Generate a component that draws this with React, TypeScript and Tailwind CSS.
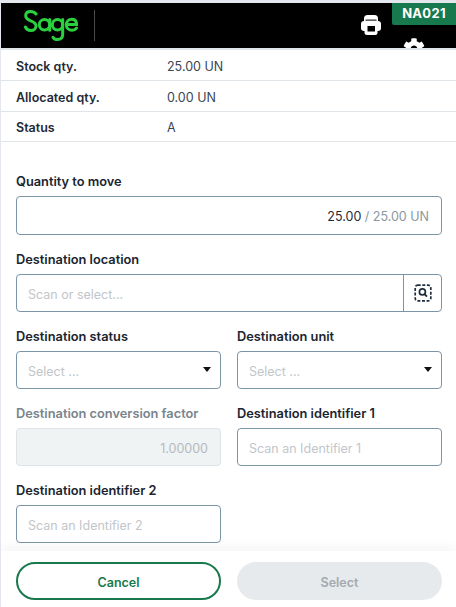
import { FaCog } from "react-icons/fa";

const font = { fontFamily: "Inter, 'Noto Sans', sans-serif" };

const SageLogo = () => (
  <svg width="54" height="31" viewBox="0 0 54 31" fill="none" stroke="#2bd03f" strokeWidth="3" strokeLinecap="round">
    <path d="M12 4C10.5 2 8.5 1.5 6.5 1.5 3.5 1.5 1.7 3.2 1.7 5.8c0 2.7 2 3.9 5 5 3.5 1.2 5.3 2.5 5.3 5.2 0 2.7-2.2 4.5-5.2 4.5-2.5 0-4.3-1.2-5.4-3.5" />
    <circle cx="20.5" cy="14.8" r="5.2" />
    <path d="M25.7 9.5V20.3" />
    <circle cx="33.5" cy="14.8" r="5.2" />
    <path d="M38.7 9.5V24.5c0 3.3-2.2 5-5.2 5-2 0-3.5-.7-4.5-2.2" />
    <path d="M42.8 14.6H52.6C52.6 11 50.8 9.2 47.8 9.2 44.6 9.2 42.3 11.4 42.3 14.7 42.3 18 44.8 20.3 48 20.3c2 0 3.5-.8 4.5-2.2" />
  </svg>
);

const PrintIcon = () => (
  <svg width="20" height="20" viewBox="0 0 20 20" className="absolute top-[12px] left-[360px]">
    <rect x="3" y="0" width="14" height="9" rx="3.5" fill="#fff" />
    <rect x="4.5" y="4.6" width="11" height="1" fill="#000" />
    <rect x="0" y="6" width="20" height="10" rx="3" fill="#fff" />
    <rect x="3.5" y="10" width="13" height="10" rx="2.5" fill="#fff" />
    <rect x="6.5" y="11" width="7.5" height="5.5" fill="#000" />
  </svg>
);

const ScanIcon = () => (
  <svg width="18" height="18" viewBox="0 0 18 18" fill="none" stroke="#1f2d3d">
    <rect x="1.2" y="1.2" width="15.6" height="15.6" rx="2.5" strokeWidth="1.7" strokeDasharray="3 1.6" />
    <circle cx="8.4" cy="7.9" r="3" strokeWidth="1.7" />
    <path d="M10.6 10.2l2.4 2.4" strokeWidth="1.9" />
  </svg>
);

const Info = ({ label, value, last }: { label: string; value: string; last?: boolean }) => (
  <div className={`flex items-center border-b border-[#e0e5ea] pl-[15px] text-[12.5px] ${last ? "h-[30px] pt-[4px]" : "h-[31px] pt-[5px]"}`}>
    <span className="w-[151px] font-semibold text-[#1f2a36]">{label}</span>
    <span className="text-[#3a4652]">{value}</span>
  </div>
);

const Label = ({ children, muted }: { children: string; muted?: boolean }) => (
  <div className={`mb-[6px] h-[17px] pt-px text-[12.8px] leading-4 font-semibold ${muted ? "text-[#7a848c]" : "text-[#1b2530]"}`}>
    {children}
  </div>
);

const TextField = ({ label, placeholder }: { label: string; placeholder: string }) => (
  <div>
    <Label>{label}</Label>
    <div className="flex h-[38px] items-center rounded-[4px] border border-[#7a95a8] px-[11px] pt-[4px] text-[12.5px] text-[#c2c6ca]">
      {placeholder}
    </div>
  </div>
);

const SelectField = ({ label }: { label: string }) => (
  <div>
    <Label>{label}</Label>
    <div className="flex h-[38px] items-center justify-between rounded-[4px] border border-[#7a95a8] pr-[9px] pl-[11px] text-[12.5px] text-[#c2c6ca]">
      <span className="pt-[4px]">Select ...</span>
      <span className="mb-[2px] h-0 w-0 border-x-[4.5px] border-t-[5px] border-x-transparent border-t-[#111]" />
    </div>
  </div>
);

export default function App() {
  return (
    <div className="flex h-[607px] w-[456px] flex-col overflow-hidden bg-[#e4e8ee] pt-[3px] pl-px" style={font}>
      <header className="relative flex h-[45px] shrink-0 items-center overflow-hidden bg-black pl-[23px]">
        <SageLogo />
        <div className="ml-[16px] h-[31px] w-px bg-[#4a4a4a]" />
        <PrintIcon />
        <FaCog className="absolute top-[35px] left-[402px] text-[22px] text-white" />
        <div className="absolute top-0 right-0 flex h-[22px] w-[64px] items-center justify-center rounded-bl-[2px] bg-[#18794e] text-[13px] font-bold tracking-[0.3px] text-white">
          NA021
        </div>
      </header>
      <div className="min-h-0 flex-1 overflow-hidden bg-white">
        <div className="h-[2px] bg-[#e0e5ea]" />
        <Info label="Stock qty." value="25.00 UN" />
        <Info label="Allocated qty." value="0.00 UN" />
        <Info label="Status" value="A" last />
        <div className="flex flex-col gap-[16px] px-[15px] pt-[31px] pr-[14px]">
          <div>
            <Label>Quantity to move</Label>
            <div className="flex h-[39px] items-center justify-end rounded-[4px] border border-[#7a95a8] px-3 pt-[4px] text-[12.5px] text-[#8b979f]">
              <span className="text-[#1f2a36]">25.00</span>&nbsp;/ 25.00 UN
            </div>
          </div>
          <div>
            <Label>Destination location</Label>
            <div className="flex h-[38px] rounded-[4px] border border-[#7a95a8] text-[12.5px] text-[#c2c6ca]">
              <div className="flex flex-1 items-center px-[11px] pt-[4px]">Scan or select...</div>
              <div className="flex w-[38px] items-center justify-center border-l border-[#7a95a8]">
                <ScanIcon />
              </div>
            </div>
          </div>
          <div className="grid grid-cols-2 gap-x-[16px] gap-y-[16px]">
            <SelectField label="Destination status" />
            <SelectField label="Destination unit" />
            <div>
              <Label muted>Destination conversion factor</Label>
              <div className="flex h-[38px] items-center justify-end rounded-[4px] border border-[#dde3e6] bg-[#f0f3f4] px-3 pt-[4px] text-[12.5px] text-[#b4babe]">
                1.00000
              </div>
            </div>
            <TextField label="Destination identifier 1" placeholder="Scan an Identifier 1" />
            <TextField label="Destination identifier 2" placeholder="Scan an Identifier 2" />
          </div>
        </div>
      </div>
      <footer className="grid h-[56px] shrink-0 grid-cols-2 gap-[16px] bg-white px-[15px] pt-[11px] pr-[14px] shadow-[0_-6px_8px_rgba(0,0,0,0.03)]">
        <button className="h-[38px] rounded-full border-2 border-[#18794e] pt-[4px] text-[12.5px] font-semibold text-[#18794e]">
          Cancel
        </button>
        <button className="h-[38px] rounded-full bg-[#e6eaec] pt-[4px] text-[12.5px] font-semibold text-[#a3a9ae]">
          Select
        </button>
      </footer>
    </div>
  );
}
